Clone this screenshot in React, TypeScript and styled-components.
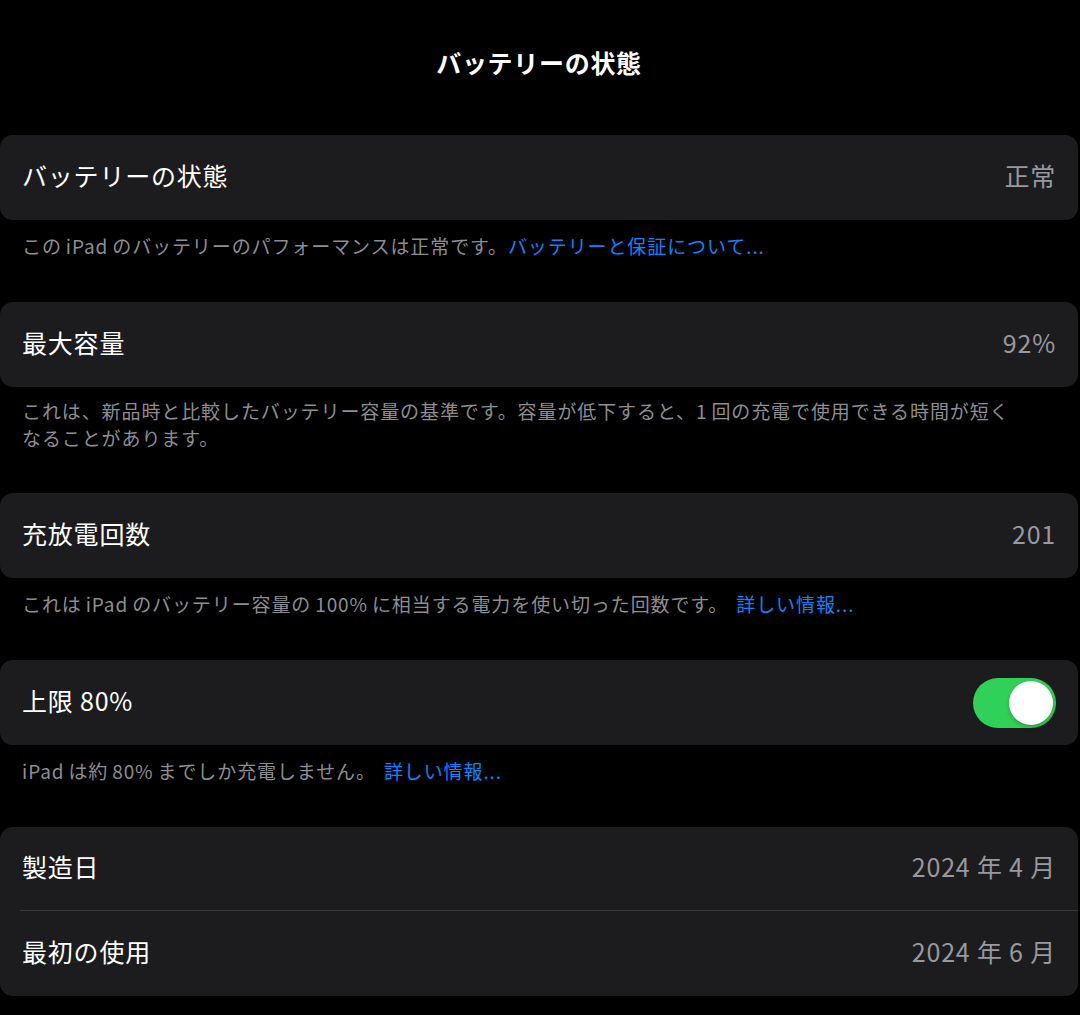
import React from "react";
import styled, { createGlobalStyle } from "styled-components";

const GlobalStyle = createGlobalStyle`
  html, body {
    margin: 0;
    padding: 0;
    background: #000;
  }
  body {
    font-family: "Noto Sans CJK JP", "Noto Sans", sans-serif;
    -webkit-font-smoothing: antialiased;
  }
`;

const Page = styled.div`
  width: 1080px;
  min-height: 1015px;
  background: #000;
  color: #fff;
  padding-right: 2px;
  box-sizing: border-box;
`;

const Header = styled.div`
  height: 135px;
  display: flex;
  justify-content: center;
  padding-top: 47px;
  box-sizing: border-box;
`;

const Title = styled.h1`
  margin: 0;
  font-size: 25px;
  line-height: 30px;
  font-weight: 700;
  letter-spacing: 0.7px;
`;

const Card = styled.div`
  background: #1c1c1e;
  border-radius: 13px;
  overflow: hidden;
`;

const Row = styled.div<{ $divider?: boolean }>`
  height: 85px;
  box-sizing: border-box;
  display: flex;
  align-items: center;
  justify-content: space-between;
  padding: 0 22px 6px;
  position: relative;

  ${({ $divider }) =>
    $divider &&
    `
    height: 84px;
    &::after {
      content: "";
      position: absolute;
      left: 20px;
      right: 0;
      bottom: 0;
      height: 1px;
      background: #38383a;
    }
  `}
`;

const Label = styled.span`
  font-size: 25px;
  letter-spacing: 0.8px;
  color: #fff;
  white-space: pre;
`;

const Value = styled.span`
  font-size: 25px;
  letter-spacing: 0.8px;
  color: #98989f;
  white-space: pre;
`;

const Footer = styled.p<{ $tight?: boolean }>`
  margin: 0;
  padding: ${({ $tight }) => ($tight ? "10px 58px 42px 22px" : "12px 22px 43px")};
  font-size: 19px;
  line-height: 27px;
  letter-spacing: 0.9px;
  color: #8d8d93;
`;

const Gap = styled.span`
  display: inline-block;
  width: 4px;
`;

const Link = styled.a<{ $gap?: boolean }>`
  color: #0a84ff;
  text-decoration: none;
  margin-left: ${({ $gap }) => ($gap ? "8px" : "0")};
`;

const Switch = styled.div<{ $on: boolean }>`
  width: 83px;
  height: 50px;
  border-radius: 25px;
  background: ${({ $on }) => ($on ? "#30d158" : "#39393d")};
  position: relative;
  flex-shrink: 0;
  margin-top: 6px;
`;

const Thumb = styled.span<{ $on: boolean }>`
  position: absolute;
  top: 3px;
  left: ${({ $on }) => ($on ? "36px" : "3px")};
  width: 44px;
  height: 44px;
  border-radius: 50%;
  background: #fff;
  box-shadow: 0 2px 4px rgba(0, 0, 0, 0.25);
`;

export default function App() {
  return (
    <Page>
      <GlobalStyle />
      <Header>
        <Title>バッテリーの状態</Title>
      </Header>

      <Card>
        <Row>
          <Label>バッテリーの状態</Label>
          <Value>正常</Value>
        </Row>
      </Card>
      <Footer>
        この<Gap />iPad<Gap />のバッテリーのパフォーマンスは正常です。
        <Link>バッテリーと保証について...</Link>
      </Footer>

      <Card>
        <Row>
          <Label>最大容量</Label>
          <Value>92%</Value>
        </Row>
      </Card>
      <Footer $tight>
        これは、新品時と比較したバッテリー容量の基準です。容量が低下すると、1<Gap />回の充電で使用できる時間が短くなることがあります。
      </Footer>

      <Card>
        <Row>
          <Label>充放電回数</Label>
          <Value>201</Value>
        </Row>
      </Card>
      <Footer>
        これは<Gap />iPad<Gap />のバッテリー容量の<Gap />100%<Gap />に相当する電力を使い切った回数です。
        <Link $gap>詳しい情報...</Link>
      </Footer>

      <Card>
        <Row>
          <Label>上限 80%</Label>
          <Switch $on>
            <Thumb $on />
          </Switch>
        </Row>
      </Card>
      <Footer>
        iPad<Gap />は約<Gap />80%<Gap />までしか充電しません。
        <Link $gap>詳しい情報...</Link>
      </Footer>

      <Card>
        <Row $divider>
          <Label>製造日</Label>
          <Value>2024 年 4 月</Value>
        </Row>
        <Row>
          <Label>最初の使用</Label>
          <Value>2024 年 6 月</Value>
        </Row>
      </Card>
    </Page>
  );
}
